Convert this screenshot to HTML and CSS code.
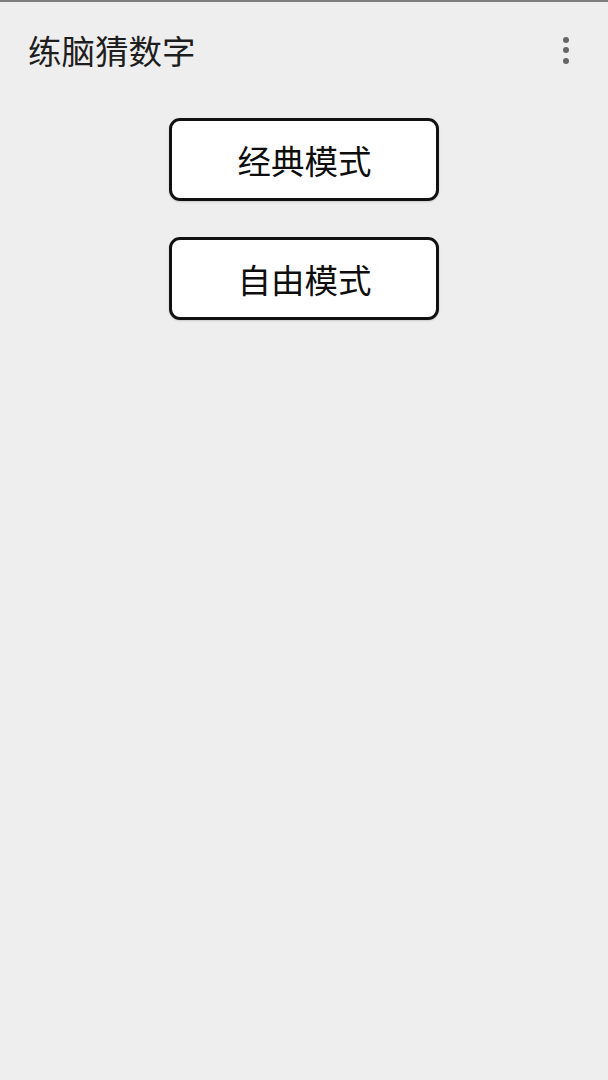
FILE: index.html
```html
<!DOCTYPE html>
<html lang="zh">
<head>
<meta charset="utf-8">
<title>练脑猜数字</title>
<link rel="stylesheet" href="styles.css">
</head>
<body>
<div class="statusline"></div>
<header class="appbar">
  <h1 class="title">练脑猜数字</h1>
  <div class="menu" aria-label="更多">
    <span class="dot"></span><span class="dot"></span><span class="dot"></span>
  </div>
</header>
<main class="modes">
  <button class="mode-btn">经典模式</button>
  <button class="mode-btn">自由模式</button>
</main>
</body>
</html>
```
FILE: styles.css
```css
html, body {
  margin: 0;
  padding: 0;
  background: #eeeeee;
  height: 100%;
}
body {
  font-family: "Noto Sans CJK SC", "Noto Sans", sans-serif;
  color: #222222;
}
.statusline {
  height: 2px;
  background: #7e7e7e;
}
.appbar {
  height: 96px;
  display: flex;
  align-items: center;
  justify-content: space-between;
  padding: 0 39px 0 28px;
  box-sizing: border-box;
}
.title {
  margin: 0;
  font-size: 33.5px;
  font-weight: 400;
  line-height: 1;
  color: #1e1e1e;
}
.menu {
  display: flex;
  flex-direction: column;
  gap: 4.5px;
  align-items: center;
  width: 6px;
}
.dot {
  width: 6px;
  height: 6px;
  border-radius: 50%;
  background: #666666;
}
.modes {
  display: flex;
  flex-direction: column;
  align-items: center;
  gap: 36px;
  padding-top: 20px;
}
.mode-btn {
  width: 270px;
  height: 83px;
  box-sizing: border-box;
  border: 3px solid #111111;
  border-radius: 11px;
  background: #ffffff;
  font-family: "Noto Sans CJK SC", "Noto Sans", sans-serif;
  font-size: 33.5px;
  font-weight: 400;
  color: #0e0e0e;
  padding: 0 0 0 1px;
  margin: 0;
  box-shadow: 0 1px 2px rgba(0,0,0,0.15);
}
```
